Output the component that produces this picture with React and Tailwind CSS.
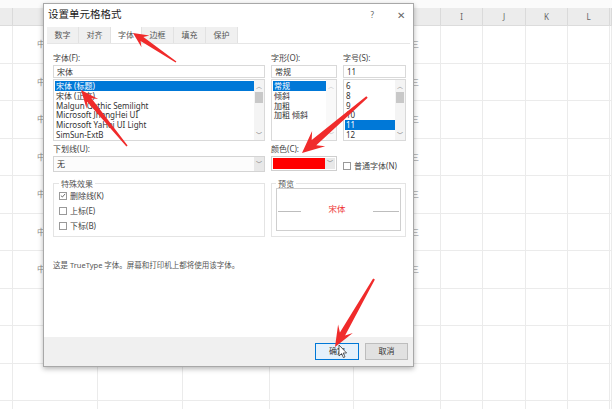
import React from "react";

const COLS = [
  { w: 13, l: "" },
  { w: 85, l: "D" },
  { w: 85, l: "E" },
  { w: 87, l: "F" },
  { w: 84, l: "G" },
  { w: 87, l: "H" },
  { w: 42, l: "I" },
  { w: 43, l: "J" },
  { w: 42, l: "K" },
  { w: 42, l: "L" },
  { w: 2, l: "" },
];

const fontList = [
  "宋体 (标题)",
  "宋体 (正文)",
  "Malgun Gothic Semilight",
  "Microsoft JhengHei UI",
  "Microsoft YaHei UI Light",
  "SimSun-ExtB",
];
const styleList = ["常规", "倾斜", "加粗", "加粗 倾斜"];
const sizeList = ["6", "8", "9", "10", "11", "12"];

// tapered red arrow, tail -> tip
function arrowPoints(x1, y1, x2, y2, hl, hw, sw0, sw1) {
  const dx = x2 - x1;
  const dy = y2 - y1;
  const len = Math.hypot(dx, dy);
  const ux = dx / len;
  const uy = dy / len;
  const px = -uy;
  const py = ux;
  const bx = x2 - ux * hl;
  const by = y2 - uy * hl;
  const nx = bx + ux * hl * 0.28;
  const ny = by + uy * hl * 0.28;
  const pts = [
    [x1 + (px * sw0) / 2, y1 + (py * sw0) / 2],
    [nx + (px * sw1) / 2, ny + (py * sw1) / 2],
    [bx + (px * hw) / 2, by + (py * hw) / 2],
    [x2, y2],
    [bx - (px * hw) / 2, by - (py * hw) / 2],
    [nx - (px * sw1) / 2, ny - (py * sw1) / 2],
    [x1 - (px * sw0) / 2, y1 - (py * sw0) / 2],
  ];
  return pts.map((p) => p[0].toFixed(1) + "," + p[1].toFixed(1)).join(" ");
}

const arrows = [
  [176, 62, 133, 33, 15, 14, 1.5, 5],
  [127, 146, 81, 90, 18, 15, 1.5, 5.5],
  [367, 97, 302, 153, 22, 20, 2, 7],
  [374, 279, 335, 347, 21, 17, 2, 6],
];

const ScrollBar = ({ thumb }) => (
  <div className="w-[10px] h-full flex flex-col items-center bg-[#f4f4f4]">
    <span className="h-[12px] text-[6px] leading-[12px] text-[#777]">︿</span>
    {thumb ? <div className="w-[8px] h-[11px] bg-[#c8c8c8]" /> : null}
    <div className="flex-1" />
    <span className="h-[10px] text-[6px] leading-[10px] text-[#777]">﹀</span>
  </div>
);

const ListBox = ({ items, selected, thumb, dim }) => (
  <div className="mt-[1px] h-[62px] border border-[#d9d9d9] bg-white flex">
    <div className="flex-1 pt-[1px] pl-[1px] overflow-hidden">
      {items.map((it, i) => (
        <div
          key={it}
          className={
            "h-[9.8px] leading-[9.8px] pl-[1px] whitespace-nowrap " +
            (i === selected ? "bg-[#0078d7] text-white" : "text-[#333]")
          }
        >
          {it}
        </div>
      ))}
    </div>
    <div className={dim ? "opacity-50 h-full" : "h-full"}>
      <ScrollBar thumb={thumb} />
    </div>
  </div>
);

const Label = ({ children, className = "" }) => (
  <div className={"h-[10px] leading-[10px] text-[#444] " + className}>{children}</div>
);

const Input = ({ children }) => (
  <div className="mt-[2px] h-[13px] border border-[#d9d9d9] bg-white pl-[3px] leading-[11px] text-[#333]">
    {children}
  </div>
);

const Check = ({ checked, children }) => (
  <div className="h-[15px] flex items-center gap-[3px]">
    <div className="w-[8px] h-[8px] border border-[#999] bg-white flex items-center justify-center">
      {checked ? (
        <svg width="7" height="7" viewBox="0 0 7 7">
          <path d="M1 3.6 L2.8 5.3 L6 1.6" stroke="#444" strokeWidth="0.9" fill="none" />
        </svg>
      ) : null}
    </div>
    <span className="text-[#444]">{children}</span>
  </div>
);

export default function App() {
  return (
    <div className="relative w-[612px] h-[409px] overflow-hidden bg-white font-['Noto_Sans','Noto_Sans_CJK_SC',sans-serif]">
      {/* spreadsheet behind */}
      <div className="h-[8px] bg-[#fbfbfb]" />
      <div className="flex h-[18px] bg-[#ececec] border-b border-[#dcdcdc]">
        {COLS.map((c, i) => (
          <div
            key={i}
            style={{ width: c.w }}
            className="shrink-0 border-r border-[#dadada] text-center text-[8px] leading-[17px] text-[#666]"
          >
            {i >= 6 ? c.l : ""}
          </div>
        ))}
      </div>
      {Array.from({ length: 11 }).map((_, r) => (
        <div key={r} className="flex h-[37.5px] border-b border-[#ebebeb]">
          {COLS.map((c, i) => (
            <div
              key={i}
              style={{ width: c.w }}
              className="shrink-0 border-r border-[#ebebeb] text-[8px] leading-[36px] text-[#888] overflow-hidden whitespace-nowrap"
            >
              {i === 1 && r < 7 ? <span className="pl-[24px]">中国</span> : null}
              {i === 5 && r < 7 ? <span className="pl-[57px]">三</span> : null}
            </div>
          ))}
        </div>
      ))}

      {/* Format Cells dialog */}
      <div className="absolute left-[43px] top-[3px] w-[371px] h-[364px] bg-white border border-[#a8a8a8] shadow-[0_2px_5px_rgba(0,0,0,0.28)] flex flex-col text-[8px]">
        <div className="h-[22px] flex items-center pl-[4px] pr-[8px]">
          <span className="text-[10.5px] text-[#222]">设置单元格格式</span>
          <div className="flex-1" />
          <span className="text-[8px] text-[#666] mr-[23px]">?</span>
          <span className="text-[10px] text-[#666]">✕</span>
        </div>
        <div className="mt-[1px] ml-[3px] flex h-[16px]">
          {["数字", "对齐", "字体", "边框", "填充", "保护"].map((t, i) => (
            <div
              key={t}
              className={
                "h-full flex items-center justify-center border-r border-[#e2e2e2] text-[#555] " +
                (i === 2 ? "bg-white w-[31px]" : "bg-[#f0f0f0] w-[32px]")
              }
            >
              {t}
            </div>
          ))}
        </div>
        <div className="ml-[3px] mr-[3px] flex-1 pl-[6px] pt-[9px] pr-[4px] border-t border-[#e6e6e6]">
          {/* top row */}
          <div className="flex gap-[6px]">
            <div className="w-[212px]">
              <Label>字体(F):</Label>
              <Input>宋体</Input>
              <ListBox items={fontList} selected={0} thumb />
            </div>
            <div className="w-[66px]">
              <Label>字形(O):</Label>
              <Input>常规</Input>
              <ListBox items={styleList} selected={0} dim />
            </div>
            <div className="w-[63px]">
              <Label>字号(S):</Label>
              <Input>11</Input>
              <ListBox items={sizeList} selected={4} thumb />
            </div>
          </div>
          {/* underline / colour row */}
          <div className="mt-[3px] flex gap-[6px]">
            <div className="w-[212px]">
              <Label>下划线(U):</Label>
              <div className="mt-[2px] h-[16px] border border-[#d4d4d4] bg-[#fcfcfc] flex">
                <span className="flex-1 pl-[3px] leading-[14px] text-[#333]">无</span>
                <span className="w-[10px] bg-[#e8e8e8] text-[6px] leading-[14px] text-center text-[#777]">﹀</span>
              </div>
            </div>
            <div className="w-[66px]">
              <Label>颜色(C):</Label>
              <div className="mt-[2px] h-[15px] border border-[#cfcfcf] bg-white flex p-[1px]">
                <span className="flex-1 bg-[#ff0000]" />
                <span className="w-[10px] bg-[#e8e8e8] text-[6px] leading-[11px] text-center text-[#777]">﹀</span>
              </div>
            </div>
            <div className="pt-[14px] flex items-start">
              <Check>普通字体(N)</Check>
            </div>
          </div>
          {/* groups */}
          <div className="mt-[6px] flex gap-[6px]">
            <fieldset className="w-[212px] h-[58px] border border-[#e4e4e4] pl-[5px]">
              <legend className="px-[2px] text-[#555] leading-[9px]">特殊效果</legend>
              <Check checked>删除线(K)</Check>
              <Check>上标(E)</Check>
              <Check>下标(B)</Check>
            </fieldset>
            <fieldset className="w-[135px] h-[58px] border border-[#e4e4e4] px-[4px] pb-[4px]">
              <legend className="px-[2px] text-[#555] leading-[9px]">预览</legend>
              <div className="h-[43px] border border-[#cfcfcf] flex items-center justify-between px-[1px]">
                <span className="w-[23px] border-t border-[#bdbdbd] mt-[3px]" />
                <span className="text-[#e33] text-[8.5px]">宋体</span>
                <span className="w-[26px] border-t border-[#bdbdbd] mt-[3px]" />
              </div>
            </fieldset>
          </div>
          <div className="mt-[23px] text-[#555] text-[7.5px]">
            这是 TrueType 字体。屏幕和打印机上都将使用该字体。
          </div>
        </div>
        {/* footer */}
        <div className="h-[29px] bg-[#f0f0f0] flex items-center justify-end gap-[6px] pr-[5px] pb-[1px]">
          <div className="w-[44px] h-[17px] border border-[#0078d7] bg-[#e5f1fb] flex items-center justify-center text-[#333]">
            确定
          </div>
          <div className="w-[43px] h-[17px] border border-[#bdbdbd] bg-[#e1e1e1] flex items-center justify-center text-[#333]">
            取消
          </div>
        </div>
      </div>

      {/* annotation overlay: arrows + cursor */}
      <svg className="absolute inset-0 pointer-events-none" width="612" height="409" viewBox="0 0 612 409">
        {arrows.map((a, i) => (
          <polygon key={i} points={arrowPoints(...a)} fill="#f02b2b" />
        ))}
        <path
          d="M339 345 L339 356 L341.6 353.6 L343.4 357.6 L345 356.9 L343.2 353 L346.6 353 Z"
          fill="#fff"
          stroke="#222"
          strokeWidth="0.7"
        />
      </svg>
    </div>
  );
}
